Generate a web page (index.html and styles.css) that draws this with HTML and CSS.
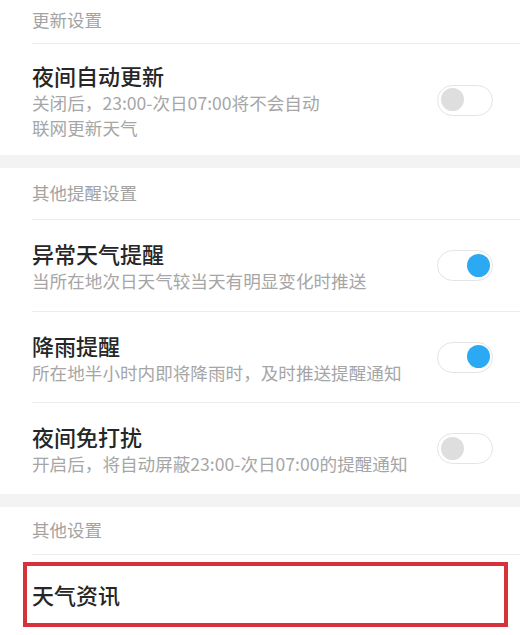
FILE: index.html
```html
<!DOCTYPE html>
<html lang="zh-CN">
<head>
<meta charset="utf-8">
<title>天气设置</title>
<link rel="stylesheet" href="styles.css">
</head>
<body>
<div class="page">
  <section class="group">
    <div class="group-title first">更新设置</div>
    <div class="item">
      <div class="item-text">
        <div class="item-name">夜间自动更新</div>
        <div class="item-desc">关闭后，23:00-次日07:00将不会自动<br>联网更新天气</div>
      </div>
      <span class="switch"></span>
    </div>
  </section>

  <div class="gap"></div>

  <section class="group">
    <div class="group-title second">其他提醒设置</div>
    <div class="item">
      <div class="item-text">
        <div class="item-name">异常天气提醒</div>
        <div class="item-desc">当所在地次日天气较当天有明显变化时推送</div>
      </div>
      <span class="switch on"></span>
    </div>
    <div class="item">
      <div class="item-text">
        <div class="item-name">降雨提醒</div>
        <div class="item-desc">所在地半小时内即将降雨时，及时推送提醒通知</div>
      </div>
      <span class="switch on"></span>
    </div>
    <div class="item">
      <div class="item-text">
        <div class="item-name">夜间免打扰</div>
        <div class="item-desc">开启后，将自动屏蔽23:00-次日07:00的提醒通知</div>
      </div>
      <span class="switch"></span>
    </div>
  </section>

  <div class="gap"></div>

  <section class="group">
    <div class="group-title third">其他设置</div>
    <div class="link-row">
      <div class="link-box">天气资讯</div>
    </div>
  </section>
</div>
</body>
</html>
```

FILE: styles.css
```css
* {
  box-sizing: border-box;
}

html, body {
  margin: 0;
  padding: 0;
  background: #ffffff;
}

body {
  font-family: "Noto Sans CJK SC", "Noto Sans", sans-serif;
  color: #1e1e1e;
  overflow: hidden;
}

.page {
  width: 520px;
  height: 635px;
  overflow: hidden;
}

.group-title {
  display: flex;
  align-items: center;
  padding-left: 32px;
  font-size: 17.5px;
  color: #a3a3a3;
  line-height: 1;
}

.group-title.first {
  height: 43px;
  padding-bottom: 4px;
}

.group-title.second {
  height: 51px;
  padding-bottom: 2px;
}

.group-title.third {
  height: 47px;
}

.item {
  margin-left: 32px;
  min-height: 91.5px;
  padding: 16px 27px 15px 0;
  border-top: 1px solid #ececec;
  display: flex;
  align-items: center;
  justify-content: space-between;
}

.item-name {
  font-size: 22px;
  font-weight: 500;
  line-height: 30px;
  color: #262626;
}

.item-desc {
  font-size: 17.6px;
  line-height: 25px;
  color: #a6a6a6;
}

.gap {
  height: 13px;
  background: #f3f3f3;
}

.switch {
  position: relative;
  flex: none;
  width: 56px;
  height: 31px;
  border: 1.5px solid #e4e4e4;
  border-radius: 16px;
  background: #ffffff;
}

.switch::after {
  content: "";
  position: absolute;
  top: 2.5px;
  left: 2.5px;
  width: 23px;
  height: 23px;
  border-radius: 50%;
  background: #dedede;
}

.switch.on::after {
  left: auto;
  right: 2.5px;
  background: #2ba9f3;
}

.link-row {
  margin-left: 32px;
  border-top: 1px solid #ececec;
  padding-top: 7px;
  padding-bottom: 20px;
}

.link-box {
  margin-left: -9px;
  margin-right: 12px;
  height: 65px;
  border: 4px solid #d6323c;
  padding-left: 5px;
  display: flex;
  align-items: center;
  font-size: 22px;
  font-weight: 500;
  color: #262626;
}
```
